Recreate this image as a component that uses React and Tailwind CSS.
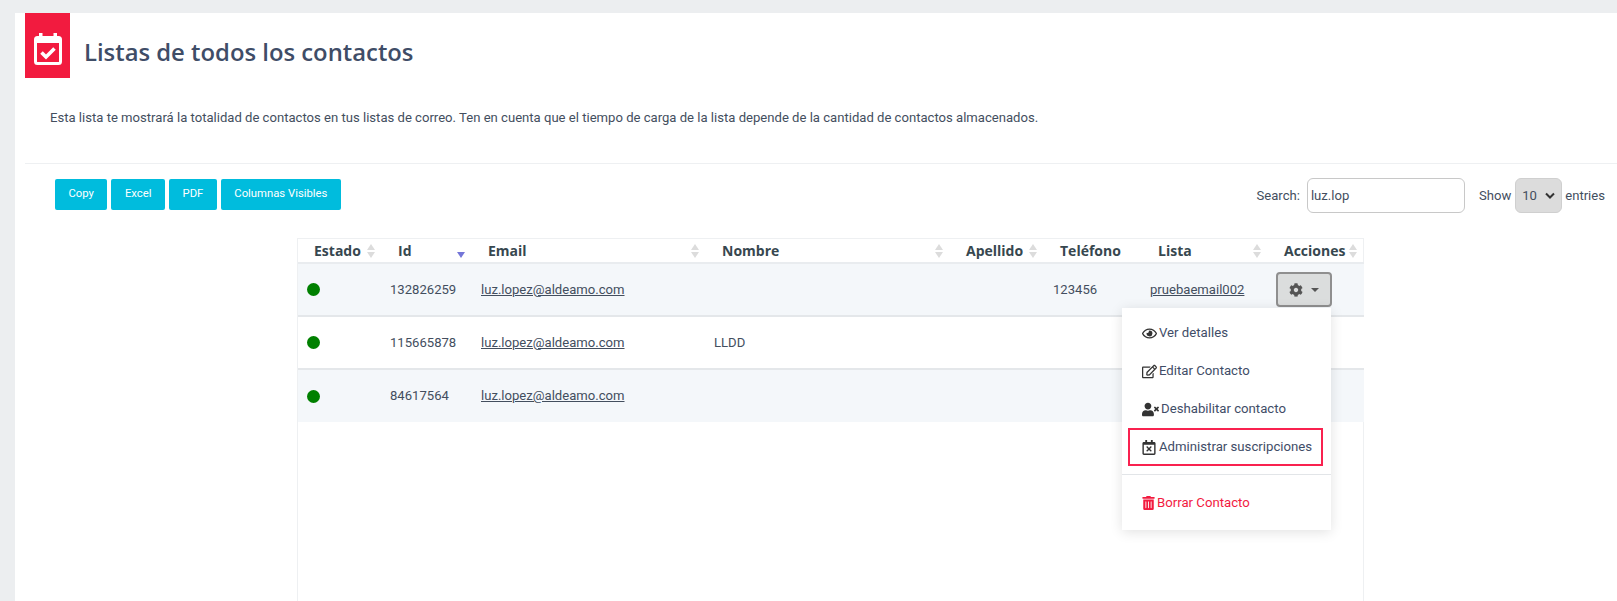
import { FaCog, FaRegEye, FaRegEdit, FaUserTimes, FaRegCalendarTimes, FaTrashAlt } from 'react-icons/fa';

const SortIcon = ({ active }) => (
  <span className="flex flex-col gap-[2px] shrink-0">
    <span className={`w-0 h-0 border-x-[4px] border-x-transparent border-b-[6px] ${active ? 'border-b-transparent' : 'border-b-[#dcdcdc]'}`} />
    <span className={`w-0 h-0 border-x-[4px] border-x-transparent border-t-[6px] ${active ? 'border-t-[#7476d8]' : 'border-t-[#dcdcdc]'}`} />
  </span>
);

const columns = [
  { label: 'Estado', width: 'w-[84px]' },
  { label: 'Id', width: 'w-[90px]', active: true },
  { label: 'Email', width: 'w-[234px]' },
  { label: 'Nombre', width: 'w-[244px]' },
  { label: 'Apellido', width: 'w-[94px]' },
  { label: 'Teléfono', width: 'w-[98px]', noSort: true },
  { label: 'Lista', width: 'w-[126px]' },
  { label: 'Acciones', width: 'w-[96px]' },
];

const rows = [
  { id: '132826259', nombre: '', telefono: '123456', lista: 'pruebaemail002', bg: 'bg-[#f4f7fa]', menu: true },
  { id: '115665878', nombre: 'LLDD', telefono: '', lista: '', bg: 'bg-white' },
  { id: '84617564', nombre: '', telefono: '', lista: '', bg: 'bg-[#f4f7fa]', last: true },
];

const MenuItem = ({ icon, children, boxed, danger }) => (
  <a
    href="#"
    className={`flex items-center gap-[2px] h-[38px] text-[13.2px] ${danger ? 'text-[#f21b3f]' : 'text-[#3f4d67]'} ${
      boxed ? 'ml-[6px] mr-[8px] pl-[12px] gap-[3px] border-2 border-[#f9214f]' : 'pl-[20px]'
    }`}
  >
    {icon}
    <span>{children}</span>
  </a>
);

export default function App() {
  return (
    <div className="h-[601px] overflow-hidden bg-[#eceef0] pt-[13px] pl-[15px] font-['Roboto',sans-serif] text-[#434e5e]">
      <div className="h-full bg-white pl-[10px]">
        <div className="flex items-center h-[65px]">
          <div className="flex items-center justify-center w-[45px] h-[65px] bg-[#f21b3f]">
            <svg width="28" height="32" viewBox="0 0 28 32" fill="none" className="mt-[6px]">
              <rect x="1.5" y="4.5" width="25" height="26" rx="2" stroke="white" strokeWidth="3" />
              <rect x="1.5" y="4" width="25" height="6" fill="white" />
              <rect x="5" y="0" width="3.5" height="6" fill="white" />
              <rect x="19.5" y="0" width="3.5" height="6" fill="white" />
              <path d="M7.5 19.5l4.5 4.5 8.5-8.5" stroke="white" strokeWidth="3.6" />
            </svg>
          </div>
          <h1 className="ml-[14px] mt-[15px] font-['Open_Sans',sans-serif] font-semibold text-[23.85px] leading-none text-[#3f4d67]">
            Listas de todos los contactos
          </h1>
        </div>

        <p className="mt-[30px] pl-[25px] text-[13.1px] leading-[20px]">
          Esta lista te mostrará la totalidad de contactos en tus listas de correo. Ten en cuenta que el tiempo de carga de la lista depende de la cantidad de contactos almacenados.
        </p>

        <div className="mt-[35px] border-t border-[#eef0f2] flex items-start justify-between pt-[15px] pl-[30px] pr-[12px]">
          <div className="flex gap-[4px]">
            {['Copy', 'Excel', 'PDF', 'Columnas Visibles'].map((b) => (
              <button key={b} className="h-[31px] px-[13.5px] rounded-[2px] bg-[#00bcdd] text-white text-[11.3px]">
                {b}
              </button>
            ))}
          </div>
          <div className="flex items-center -mt-[1px] text-[13.1px]">
            <label className="flex items-center gap-[7px]">
              Search:
              <input
                readOnly
                value="luz.lop"
                className="w-[158px] h-[35px] px-[3px] border border-[#c8c8c8] rounded-[6px] outline-none text-[13.1px]"
              />
            </label>
            <span className="ml-[14px]">Show</span>
            <span className="ml-[4px] flex items-center justify-between w-[47px] h-[35px] px-[6px] rounded-[6px] border border-[#cfcfcf] bg-[#dcdcdc]">
              10
              <svg width="10" height="7" viewBox="0 0 10 7" fill="none">
                <path d="M1 1.5l4 4 4-4" stroke="#333" strokeWidth="2" />
              </svg>
            </span>
            <span className="ml-[3px]">entries</span>
          </div>
        </div>

        <div className="relative mt-[25px] ml-[272px] w-[1067px] h-[400px] border-x border-t border-[#eef0f2]">
          <table className="table-fixed w-full border-collapse text-[13.1px]">
            <thead>
              <tr className="h-[24px] border-b-2 border-[#e9ecef] font-['Open_Sans',sans-serif] text-[14px]">
                {columns.map((c) => (
                  <th key={c.label} className={`${c.width} p-0 font-bold text-left text-[#37474f]`}>
                    <div className="flex items-center justify-between pl-[16px] pr-[7px]">
                      <span className="leading-none">{c.label}</span>
                      {!c.noSort && <SortIcon active={c.active} />}
                    </div>
                  </th>
                ))}
              </tr>
            </thead>
            <tbody>
              {rows.map((r) => (
                <tr key={r.id} className={`h-[53px] ${r.bg} ${r.last ? '' : 'border-b-2 border-[#e4e7ea]'}`}>
                  <td className="pl-[9px]">
                    <span className="block w-[13px] h-[13px] rounded-full bg-[#008000]" />
                  </td>
                  <td className="pl-[8px]">{r.id}</td>
                  <td className="pl-[9px] underline">luz.lopez@aldeamo.com</td>
                  <td className="pl-[8px]">{r.nombre}</td>
                  <td />
                  <td className="pl-[9px]">{r.telefono}</td>
                  <td className="pl-[8px] underline">{r.lista}</td>
                  <td className="pl-[8px]">
                    {r.menu && (
                      <button className="flex items-center justify-center gap-[8px] w-[56px] h-[35px] rounded-[4px] border-2 border-[#8f8f8f] bg-[#dbdddd] text-[#555]">
                        <FaCog className="w-[14px] h-[14px]" />
                        <span className="w-0 h-0 border-x-[4px] border-x-transparent border-t-[4px] border-t-[#555]" />
                      </button>
                    )}
                  </td>
                </tr>
              ))}
            </tbody>
          </table>

          <div className="absolute left-[824px] top-[69px] w-[209px] h-[222px] bg-white shadow-[0_2px_12px_rgba(0,0,0,0.12)] pt-[6px]">
            <MenuItem icon={<FaRegEye className="w-[15px] h-[15px] text-[#333]" />}>Ver detalles</MenuItem>
            <MenuItem icon={<FaRegEdit className="w-[15px] h-[15px] text-[#333]" />}>Editar Contacto</MenuItem>
            <MenuItem icon={<FaUserTimes className="w-[17px] h-[15px] text-[#333]" />}>Deshabilitar contacto</MenuItem>
            <MenuItem boxed icon={<FaRegCalendarTimes className="w-[14px] h-[15px] text-[#333]" />}>Administrar suscripciones</MenuItem>
            <div className="mt-[8px] border-t border-[#e2e5e8]" />
            <div className="mt-[9px]">
              <MenuItem danger icon={<FaTrashAlt className="w-[13px] h-[14px]" />}>Borrar Contacto</MenuItem>
            </div>
          </div>
        </div>
      </div>
    </div>
  );
}
